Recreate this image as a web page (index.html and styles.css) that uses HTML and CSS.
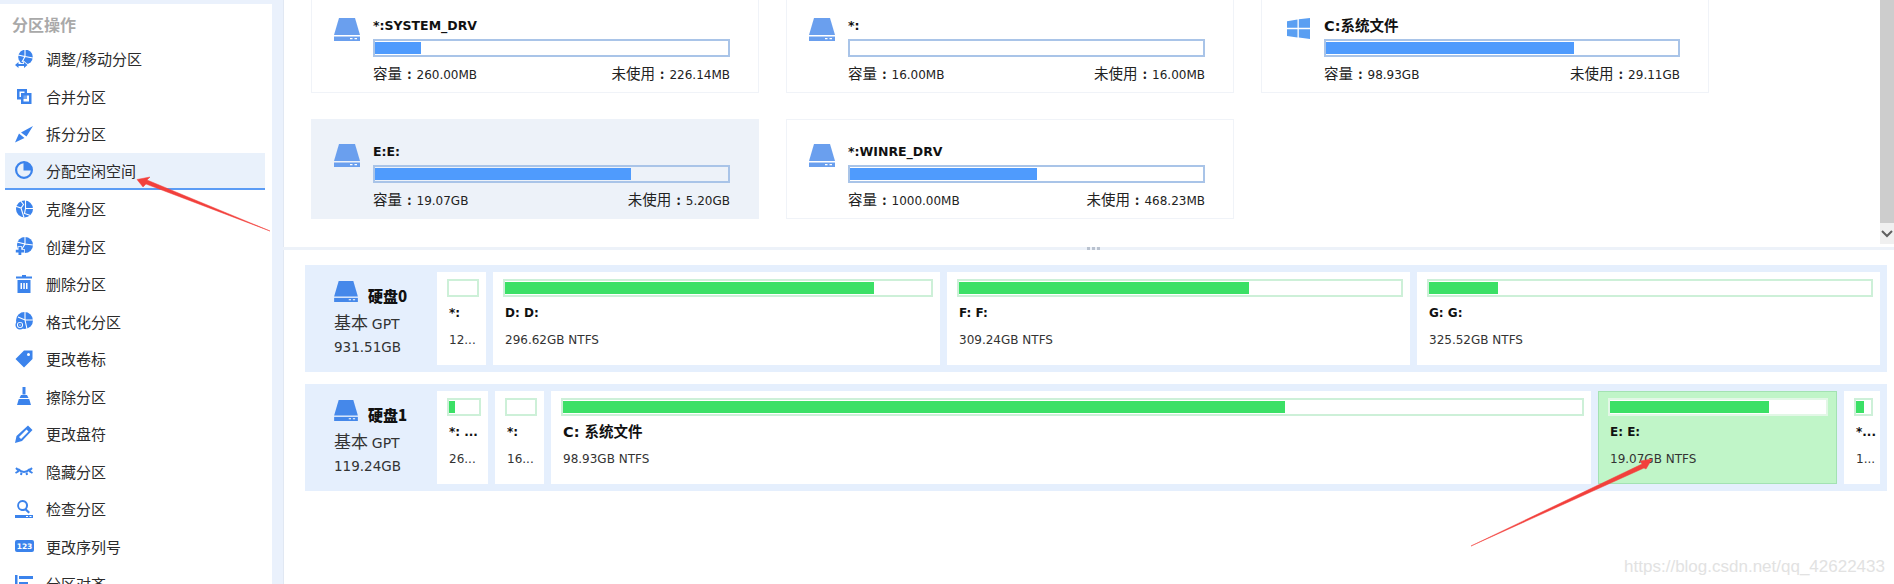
FILE: index.html
```html
<!DOCTYPE html>
<html lang="zh-CN">
<head>
    <meta charset="UTF-8">
    <title>分区操作</title>
    <link rel="stylesheet" href="styles.css">
</head>
<body>
    <svg class="defs" width="0" height="0">
        <symbol id="drive" viewBox="0 0 26 23">
            <path d="M5 0h16l5 17H0z"/>
            <path d="M0 18.500h26V23H0z"/>
            <path class="cut" d="M16 20h2.500v1.200H16zM20.500 20H23v1.200h-2.500z"/>
        </symbol>
    </svg>

    <div class="app">
        <div class="side">
            <div class="side-title">分区操作</div>
            <div class="item">
                <svg viewBox="0 0 18 18"><circle cx="10.500" cy="7" r="7.300"/><path class="crack" d="M10 0v6.500L3 5M10 6.500L7 12M10 6.500l8 1.500"/><path class="over" d="M0 15l3.500-3v2h5.500v-2l3.500 3-3.500 3v-2H3.500v2z"/></svg>
                <span>调整/移动分区</span>
            </div>
            <div class="item">
                <svg viewBox="0 0 18 18"><path fill-rule="evenodd" d="M2 2h10v4h4.500v11H6v-4.500H2zM4.500 4.500V10H6V6h3.500V4.500zM8.500 8.500V14.500H14V8.500z"/><path d="M8 8h4v4H8z" opacity=".7"/></svg>
                <span>合并分区</span>
            </div>
            <div class="item">
                <svg viewBox="0 0 18 18"><path d="M0 17.500L4 8.500l5.500 4.500zM6 7.500L18 1l-6.500 10.500z"/></svg>
                <span>拆分分区</span>
            </div>
            <div class="item active">
                <svg viewBox="0 0 18 18"><path fill-rule="evenodd" d="M9 0a9 9 0 1 0 0 18A9 9 0 0 0 9 0zM15.800 9.500a6.800 6.800 0 1 1-7.300-7.300V9.500z"/></svg>
                <span>分配空闲空间</span>
            </div>
            <div class="item">
                <svg viewBox="0 0 18 18"><circle cx="9.500" cy="9" r="8.500"/><path class="crack" d="M5 0l3.500 4.500L6 8 0 6M10.500 0v8.500H18M6 8l3 9.500M10.500 8.500l-1 5 6 2"/></svg>
                <span>克隆分区</span>
            </div>
            <div class="item">
                <svg viewBox="0 0 18 18"><circle cx="10" cy="8" r="8"/><path class="crack" d="M10 0v7l-8-2M10 7L7 12M10 7l8 1"/><path class="over" d="M3.500 10h2.800v2.800H9v2.700H6.300V18H3.500v-2.500H.800v-2.700h2.700z"/></svg>
                <span>创建分区</span>
            </div>
            <div class="item">
                <svg viewBox="0 0 18 18"><path d="M7 0h4v1.500h6V3.500H1V1.500h6z"/><path fill-rule="evenodd" d="M2.500 5h13v13h-13zM5.500 8v6h1.500V8zM8.300 8v6h1.500V8zM11 8v6h1.500V8z"/></svg>
                <span>删除分区</span>
            </div>
            <div class="item">
                <svg viewBox="0 0 18 18"><circle cx="9.500" cy="8.500" r="8.500"/><path class="crack" d="M10 0v8l-7-3M10 8h8M10 8l2 9"/><circle class="ring" cx="5" cy="13" r="3.800"/><circle class="ring" cx="5" cy="13" r="1.400"/></svg>
                <span>格式化分区</span>
            </div>
            <div class="item">
                <svg viewBox="0 0 18 18"><path fill-rule="evenodd" d="M9 .500h8.500V9L9 17.500.500 9zM13.500 3a1.500 1.500 0 1 0 0 3 1.500 1.500 0 0 0 0-3z"/></svg>
                <span>更改卷标</span>
            </div>
            <div class="item">
                <svg viewBox="0 0 18 18"><path d="M7.500 0h3v7.500h-3z"/><path d="M6 8h6l1.500 3h-9z"/><path d="M3.800 12h10.400L16 18H2z"/></svg>
                <span>擦除分区</span>
            </div>
            <div class="item">
                <svg viewBox="0 0 18 18"><path fill-rule="evenodd" d="M13 .500L17.500 5 7 16l-7 2 1.500-7zM11.500 4.500L4 12l2 2 7.500-7.500z"/></svg>
                <span>更改盘符</span>
            </div>
            <div class="item">
                <svg viewBox="0 0 18 18"><path class="lash" d="M3 7q6 6 12 0"/><path class="lash" d="M1 6l2.500 2.500M.500 11l3.500-2M6.500 10.500L6 13M11.500 10.500l.5 2.500M14.500 8.500L17 6M14 9l3.500 2"/></svg>
                <span>隐藏分区</span>
            </div>
            <div class="item">
                <svg viewBox="0 0 18 18"><path fill-rule="evenodd" d="M7.500 0a5.500 5.500 0 0 1 4.300 8.900l3.200 3.200-1.500 1.500-3.300-3.200A5.500 5.500 0 1 1 7.500 0zM7.500 2a3.500 3.500 0 1 0 0 7 3.500 3.500 0 0 0 0-7z"/><path fill-rule="evenodd" d="M0 15h18v3H0zM11 16v1h2v-1zM14.500 16v1h2v-1z"/></svg>
                <span>检查分区</span>
            </div>
            <div class="item">
                <svg class="wide" viewBox="0 0 19 12"><rect width="19" height="12" rx="2"/><text class="num" x="9.500" y="9.300">123</text></svg>
                <span>更改序列号</span>
            </div>
            <div class="item">
                <svg viewBox="0 0 18 18"><path d="M0 0h2.500v18H0zM4 1h14v3H4zM4 7h9v3H4z"/></svg>
                <span>分区对齐</span>
            </div>
        </div>

        <div class="main">
            <div class="top">
                <div class="cards">
                    <div class="card">
                        <svg class="drive"><use href="#drive"/></svg>
                        <div class="card-body">
                            <div class="card-name">*:SYSTEM_DRV</div>
                            <div class="bar"><div class="fill" style="width:13%"></div></div>
                            <div class="card-info"><span>容量<i>:</i><b>260.00MB</b></span><span>未使用<i>:</i><b>226.14MB</b></span></div>
                        </div>
                    </div>
                    <div class="card">
                        <svg class="drive"><use href="#drive"/></svg>
                        <div class="card-body">
                            <div class="card-name">*:</div>
                            <div class="bar"><div class="fill" style="width:0"></div></div>
                            <div class="card-info"><span>容量<i>:</i><b>16.00MB</b></span><span>未使用<i>:</i><b>16.00MB</b></span></div>
                        </div>
                    </div>
                    <div class="card">
                        <svg class="win" viewBox="0 0 23 21"><path d="M0 3.200l10.500-1.700v8.300H0zM11.800 1.300L23 0v9.800H11.800zM0 11.200h10.500v8.300L0 18zM11.800 11.200H23V21l-11.200-1.500z"/></svg>
                        <div class="card-body">
                            <div class="card-name cn">C:系统文件</div>
                            <div class="bar"><div class="fill" style="width:70.6%"></div></div>
                            <div class="card-info"><span>容量<i>:</i><b>98.93GB</b></span><span>未使用<i>:</i><b>29.11GB</b></span></div>
                        </div>
                    </div>
                    <div class="card selected">
                        <svg class="drive"><use href="#drive"/></svg>
                        <div class="card-body">
                            <div class="card-name">E:E:</div>
                            <div class="bar"><div class="fill" style="width:72.7%"></div></div>
                            <div class="card-info"><span>容量<i>:</i><b>19.07GB</b></span><span>未使用<i>:</i><b>5.20GB</b></span></div>
                        </div>
                    </div>
                    <div class="card">
                        <svg class="drive"><use href="#drive"/></svg>
                        <div class="card-body">
                            <div class="card-name">*:WINRE_DRV</div>
                            <div class="bar"><div class="fill" style="width:53.2%"></div></div>
                            <div class="card-info"><span>容量<i>:</i><b>1000.00MB</b></span><span>未使用<i>:</i><b>468.23MB</b></span></div>
                        </div>
                    </div>
                </div>
                <div class="scrollbar">
                    <div class="thumb"></div>
                    <div class="scroll-down"><svg viewBox="0 0 14 21"><path d="M2 8l5 5 5-5"/></svg></div>
                </div>
            </div>
            <div class="splitter"><i></i><i></i><i></i></div>

            <div class="disks">
                <div class="disk">
                    <div class="disk-info">
                        <div class="disk-head">
                            <svg class="disk-icon"><use href="#drive"/></svg>
                            <span class="disk-name">硬盘0</span>
                        </div>
                        <div class="disk-type">基本 <b>GPT</b></div>
                        <div class="disk-size">931.51GB</div>
                    </div>
                    <div class="part" style="width:49px">
                        <div class="pbar"><div class="pfill" style="width:0"></div></div>
                        <div class="pname">*:</div>
                        <div class="psize">12...</div>
                    </div>
                    <div class="part" style="width:447px">
                        <div class="pbar"><div class="pfill" style="width:86.8%"></div></div>
                        <div class="pname">D: D:</div>
                        <div class="psize">296.62GB NTFS</div>
                    </div>
                    <div class="part" style="width:463px">
                        <div class="pbar"><div class="pfill" style="width:65.8%"></div></div>
                        <div class="pname">F: F:</div>
                        <div class="psize">309.24GB NTFS</div>
                    </div>
                    <div class="part" style="width:463px">
                        <div class="pbar"><div class="pfill" style="width:15.6%"></div></div>
                        <div class="pname">G: G:</div>
                        <div class="psize">325.52GB NTFS</div>
                    </div>
                </div>
                <div class="disk">
                    <div class="disk-info">
                        <div class="disk-head">
                            <svg class="disk-icon"><use href="#drive"/></svg>
                            <span class="disk-name">硬盘1</span>
                        </div>
                        <div class="disk-type">基本 <b>GPT</b></div>
                        <div class="disk-size">119.24GB</div>
                    </div>
                    <div class="part" style="width:51px">
                        <div class="pbar"><div class="pfill" style="width:20%"></div></div>
                        <div class="pname">*: ...</div>
                        <div class="psize">26...</div>
                    </div>
                    <div class="part" style="width:49px">
                        <div class="pbar"><div class="pfill" style="width:0"></div></div>
                        <div class="pname">*:</div>
                        <div class="psize">16...</div>
                    </div>
                    <div class="part" style="width:1040px">
                        <div class="pbar"><div class="pfill" style="width:70.9%"></div></div>
                        <div class="pname big">C: 系统文件</div>
                        <div class="psize">98.93GB NTFS</div>
                    </div>
                    <div class="part current" style="width:239px">
                        <div class="pbar"><div class="pfill" style="width:74%"></div></div>
                        <div class="pname">E: E:</div>
                        <div class="psize">19.07GB NTFS</div>
                    </div>
                    <div class="part" style="width:36px">
                        <div class="pbar"><div class="pfill" style="width:57%"></div></div>
                        <div class="pname">*...</div>
                        <div class="psize">1...</div>
                    </div>
                </div>
            </div>
        </div>
    </div>

    <!-- marks drawn on top of the screenshot -->
    <svg class="marks" viewBox="0 0 1894 584">
        <path d="M137 179.500L150 177l-3 3L270 231 146 184l-3 3z"/>
        <path d="M1652 459l-12 2 2 3L1471 546l173-78 2 1z"/>
    </svg>
    <div class="watermark">https://blog.csdn.net/qq_42622433</div>
</body>
</html>
```

FILE: styles.css
```css
html, body {
    margin: 0;
    height: 100%;
    overflow: hidden;
    background: #fff;
    color: #222;
    font-family: "DejaVu Sans", "Noto Sans CJK SC", sans-serif;
    font-size: 12px;
}
.defs {
    position: absolute;
}
.cut {
    fill: #fff;
}
.app {
    display: flex;
    height: 584px;
}

/* left panel */
.side {
    box-sizing: border-box;
    width: 283px;
    flex: none;
    height: 584px;
    overflow: hidden;
    background: #fff;
    border-top: 4px solid #eaf1fc;
    border-right: 11px solid #eaf1fc;
    box-shadow: 1px 0 0 #e1e8f3;
}
.side-title {
    height: 36px;
    padding-left: 12px;
    box-sizing: border-box;
    line-height: 40px;
    font-family: "Noto Sans CJK SC", sans-serif;
    font-size: 16px;
    font-weight: 700;
    color: #a9a9a9;
}
.item {
    display: flex;
    align-items: center;
    gap: 13px;
    box-sizing: border-box;
    width: 260px;
    height: 37.5px;
    margin-left: 5px;
    padding-left: 10px;
    font-family: "Noto Sans CJK SC", sans-serif;
    font-size: 15px;
    color: #2b2b2b;
}
.item svg {
    width: 18px;
    height: 18px;
    flex: none;
    fill: #3b83ec;
}
.item svg.wide {
    width: 19px;
    height: 12px;
    margin-right: -1px;
}
.item .num {
    fill: #fff;
    font-family: "DejaVu Sans", sans-serif;
    font-size: 7.500px;
    font-weight: 700;
    text-anchor: middle;
}
.item .crack {
    fill: none;
    stroke: #fff;
    stroke-width: 1.100;
}
.item .over {
    stroke: #fff;
    stroke-width: 1.500;
    paint-order: stroke;
}
.item .ring {
    fill: #fff;
    stroke: #3b83ec;
    stroke-width: 1.500;
}
.item .lash {
    fill: none;
    stroke: #3b83ec;
    stroke-width: 2;
}
.item.active {
    background: #e9f1fb;
    border-bottom: 2px solid #5b9cf5;
}

/* partition cards */
.main {
    flex: 1;
    min-width: 0;
}
.top {
    display: flex;
    height: 247px;
    overflow: hidden;
}
.cards {
    flex: 1;
    display: grid;
    grid-template-columns: repeat(3, 448px);
    grid-auto-rows: 100px;
    gap: 26px 27px;
    margin-top: -7px;
    padding-left: 28px;
}
.card {
    box-sizing: border-box;
    display: flex;
    padding: 24px 28px 0 22px;
    border: 1px solid #f0f3f8;
}
.card.selected {
    background: #edf2f9;
    border-color: #edf2f9;
}
.drive {
    width: 26px;
    height: 23px;
    flex: none;
    margin-right: 13px;
    fill: #6a9fee;
}
.win {
    width: 23px;
    height: 21px;
    flex: none;
    margin: 0 14px 0 3px;
    fill: #5a9ff2;
}
.card-body {
    flex: 1;
    min-width: 0;
}
.card-name {
    height: 21px;
    line-height: 16px;
    font-size: 12.500px;
    font-weight: 700;
    color: #111;
}
.card-name.cn {
    font-size: 14.500px;
}
.bar {
    box-sizing: border-box;
    height: 18px;
    padding: 1px 1px 1px 0;
    border: 2px solid #a9c4e8;
}
.fill {
    height: 100%;
    background: #4f9bfd;
}
.card-info {
    display: flex;
    justify-content: space-between;
    margin-top: 6px;
    line-height: 20px;
    font-family: "Noto Sans CJK SC", sans-serif;
    font-size: 14.500px;
}
.card-info i {
    display: inline-block;
    width: 14.500px;
    text-align: center;
    font-style: normal;
    font-weight: 700;
    font-size: 13px;
}
.card-info b {
    font-family: "DejaVu Sans", sans-serif;
    font-size: 12px;
    font-weight: 400;
}

/* scrollbar and splitter */
.scrollbar {
    width: 14px;
    flex: none;
}
.thumb {
    height: 223px;
    background: #cdcdcd;
}
.scroll-down {
    height: 21px;
    background: #f0f0f0;
}
.scroll-down svg {
    display: block;
    width: 14px;
    height: 21px;
    fill: none;
    stroke: #606060;
    stroke-width: 2;
}
.splitter {
    display: flex;
    justify-content: center;
    align-items: center;
    gap: 2px;
    height: 3px;
    background: #edf2f9;
    padding-left: 10px;
}
.splitter i {
    width: 3px;
    height: 3px;
    background: #b9c2cf;
}

/* disks */
.disks {
    display: flex;
    flex-direction: column;
    gap: 12px;
    padding: 15px 0 0 22px;
}
.disk {
    box-sizing: border-box;
    display: flex;
    gap: 7px;
    width: 1582px;
    height: 107px;
    padding: 7px;
    background: #e5effd;
}
.disk-info {
    box-sizing: border-box;
    width: 118px;
    flex: none;
    padding: 9px 0 0 22px;
}
.disk-head {
    display: flex;
    align-items: flex-end;
    gap: 10px;
    height: 25px;
}
.disk-icon {
    width: 24px;
    height: 21px;
    fill: #4588ea;
    margin-bottom: 4px;
}
.disk-name {
    font-family: "Noto Sans CJK SC", sans-serif;
    font-size: 15px;
    font-weight: 900;
    line-height: 20px;
    color: #111;
}
.disk-type {
    margin-top: 4px;
    line-height: 24px;
    font-family: "Noto Sans CJK SC", sans-serif;
    font-size: 17px;
    color: #333;
}
.disk-type b {
    font-family: "DejaVu Sans", sans-serif;
    font-size: 14px;
    font-weight: 400;
}
.disk-size {
    line-height: 22px;
    font-size: 13.500px;
    color: #333;
}
.part {
    box-sizing: border-box;
    flex: none;
    padding: 7px 7px 0 10px;
    background: #fff;
    white-space: nowrap;
    overflow: hidden;
}
.part:first-of-type {
    padding-left: 9px;
}
.pbar {
    box-sizing: border-box;
    height: 18px;
    padding: 1px 1px 1px 0;
    border: 2px solid #cdf0d8;
    background: #fff;
}
.pfill {
    height: 100%;
    background: #3be066;
}
.pname {
    margin: 6px 0 0 2px;
    height: 20px;
    line-height: 20px;
    font-weight: 700;
    color: #111;
}
.pname.big {
    font-family: "DejaVu Sans", "Noto Sans CJK SC", sans-serif;
    font-size: 14.500px;
}
.psize {
    margin: 7px 0 0 2px;
    line-height: 20px;
    color: #333;
}
.part.current {
    background: #c0f5c8;
    border: 1px solid #a3e2b3;
    padding: 6px 8px 0 9px;
}
.part.current .pbar {
    border-color: #e2f7e6;
}

.marks {
    position: absolute;
    left: 0;
    top: 0;
    width: 1894px;
    height: 584px;
    fill: #f2403c;
    stroke: #f2403c;
    stroke-width: .5;
}
.watermark {
    position: absolute;
    right: 9px;
    top: 557px;
    font-family: "Liberation Sans", sans-serif;
    font-size: 17px;
    line-height: 20px;
    color: #e2e2e2;
}
```
